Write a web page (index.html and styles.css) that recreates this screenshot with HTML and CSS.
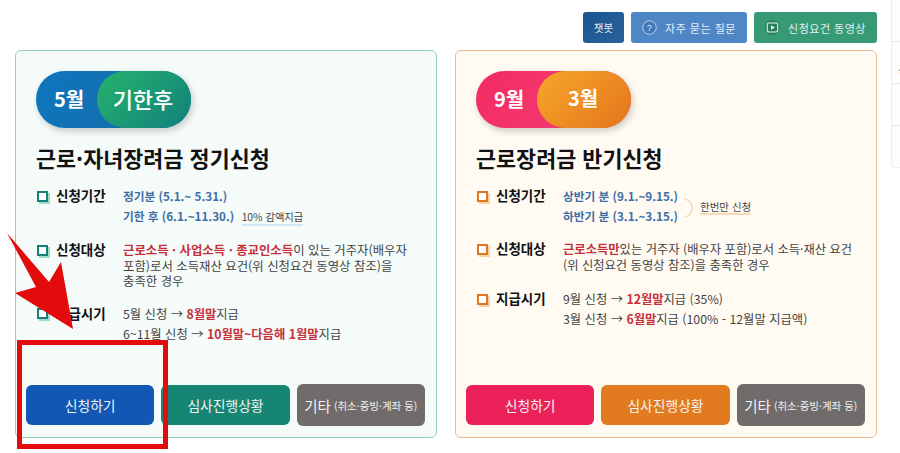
FILE: index.html
```html
<!DOCTYPE html>
<html lang="ko">
<head>
    <meta charset="utf-8">
    <title>근로장려금 신청</title>
    <link rel="stylesheet" href="styles.css">
</head>
<body>
    <div class="page">
        <div class="main">

            <div class="toolbar">
                <a class="toolBtn chatBtn">챗봇</a>
                <a class="toolBtn faqBtn">
                    <svg class="toolIcon" viewBox="0 0 20 20"><circle cx="10" cy="10" r="9" fill="#4478b4" stroke="#dbe7f5" stroke-width="1"/><text x="10" y="14.5" text-anchor="middle" font-size="12" fill="#e6eff9" font-family="Liberation Sans">?</text></svg>
                    자주 묻는 질문
                </a>
                <a class="toolBtn videoBtn">
                    <svg class="toolIcon" viewBox="0 0 20 20"><circle cx="10" cy="10" r="10" fill="#2a7f5f"/><rect x="3" y="4" width="14" height="12" rx="2.5" fill="none" stroke="#e8f5ef" stroke-width="1.4"/><path d="M8 7 L13 10 L8 13 Z" fill="#e8f5ef"/></svg>
                    신청요건 동영상
                </a>
            </div>

            <div class="cards">

                <section class="card cardGreen">
                    <div class="pill pillBlue">
                        <span class="pillStart">5월</span>
                        <span class="pillEnd pillEndGreen">기한후</span>
                    </div>
                    <h2 class="cardTitle">근로·자녀장려금 정기신청</h2>

                    <div class="infoRow">
                        <div class="infoLabel"><i class="mark markGreen"></i>신청기간</div>
                        <div class="infoValue spaced">
                            <div><b class="blue">정기분 (5.1.~ 5.31.)</b></div>
                            <div><b class="blue">기한 후 (6.1.~11.30.)</b> <span class="note noteBlue">10% 감액지급</span></div>
                        </div>
                    </div>

                    <div class="infoRow rowTarget">
                        <div class="infoLabel"><i class="mark markGreen"></i>신청대상</div>
                        <div class="infoValue wideText">
                            <b class="red">근로소득 · 사업소득 · 종교인소득</b>이 있는 거주자(배우자<br>포함)로서 소득재산 요건(위 신청요건 동영상 참조)을<br>충족한 경우
                        </div>
                    </div>

                    <div class="infoRow rowPay">
                        <div class="infoLabel"><i class="mark markGreen"></i>지급시기</div>
                        <div class="infoValue spaced">
                            <div>5월 신청 → <b class="red">8월말</b>지급</div>
                            <div>6~11월 신청 → <b class="red">10월말~다음해 1월말</b>지급</div>
                        </div>
                    </div>

                    <div class="actions">
                        <a class="actBtn btnBlue">신청하기</a>
                        <a class="actBtn btnTeal">심사진행상황</a>
                        <a class="actBtn btnGray">기타<small>(취소·증빙·계좌 등)</small></a>
                    </div>
                </section>

                <section class="card cardOrange">
                    <div class="pill pillPink">
                        <span class="pillStart">9월</span>
                        <span class="pillEnd pillEndOrange">3월</span>
                    </div>
                    <h2 class="cardTitle">근로장려금 반기신청</h2>

                    <div class="infoRow">
                        <div class="infoLabel"><i class="mark markOrange"></i>신청기간</div>
                        <div class="infoValue spaced">
                            <div><b class="blue">상반기 분 (9.1.~9.15.)</b></div>
                            <div><b class="blue">하반기 분 (3.1.~3.15.)</b></div>
                        </div>
                        <svg class="brace" viewBox="0 0 10 22"><path d="M1 1 C8 3 9 8 9 11 C9 14 8 19 1 21" fill="none" stroke="#ecd3a6" stroke-width="1.2"/></svg>
                        <span class="note noteOrange">한번만 신청</span>
                    </div>

                    <div class="infoRow rowTarget">
                        <div class="infoLabel"><i class="mark markOrange"></i>신청대상</div>
                        <div class="infoValue">
                            <b class="red">근로소득만</b>있는 거주자 (배우자 포함)로서 소득·재산 요건<br>(위 신청요건 동영상 참조)을 충족한 경우
                        </div>
                    </div>

                    <div class="infoRow rowPayShort">
                        <div class="infoLabel"><i class="mark markOrange"></i>지급시기</div>
                        <div class="infoValue spaced">
                            <div>9월 신청 → <b class="red">12월말</b>지급 (35%)</div>
                            <div>3월 신청 → <b class="red">6월말</b>지급 (100% - 12월말 지급액)</div>
                        </div>
                    </div>

                    <div class="actions">
                        <a class="actBtn btnPink">신청하기</a>
                        <a class="actBtn btnOrange">심사진행상황</a>
                        <a class="actBtn btnGray">기타<small>(취소·증빙·계좌 등)</small></a>
                    </div>
                </section>

            </div>
        </div>

        <div class="rail">
            <div class="railCell"></div>
            <div class="railCell">신</div>
            <div class="railCell"></div>
            <div class="railCell"></div>
        </div>

        <!-- annotation drawn over the page -->
        <svg class="arrow" viewBox="0 0 80 100"><polygon points="7,3 49,52 61,32 73,99 15,63 36,57" fill="#e30b0b"/></svg>
        <div class="frame"></div>
    </div>
</body>
</html>
```

FILE: styles.css
```css
*
{
    box-sizing: border-box;
}

html, body
{
    margin:   0;
    height:   453px;
    overflow: hidden;
}

body
{
    background-color: #fff;
    font-family:      "Noto Sans CJK KR", "Noto Sans", sans-serif;
    color:            #444;
}

.page
{
    position: relative;
    display:  flex;
    height:   453px;
}

.main
{
    flex:         none;
    width:        862px;
    margin-left:  15px;
    padding-top:  12px;
}

/* Top row of links */
.toolbar
{
    display:         flex;
    justify-content: flex-end;
    gap:             7px;
    height:          31px;
    margin-bottom:   7px;
}

.toolBtn
{
    display:         flex;
    align-items:     center;
    justify-content: center;
    gap:             8px;
    border-radius:   3px;
    font-size:       11px;
    color:           #e4eef8;
    letter-spacing:  0.5px;
}

.toolIcon
{
    width:  15px;
    height: 15px;
}

.chatBtn
{
    width:          41px;
    letter-spacing: 0;
    font-size:      10.5px;
    background:     linear-gradient(135deg, #1c558f, #2a6199);
}

.faqBtn
{
    width:            116px;
    background-color: #4f86c6;
}

.videoBtn
{
    width:            123px;
    background-color: #369b75;
}

/* Cards */
.cards
{
    display: flex;
    gap:     18px;
}

.card
{
    display:        flex;
    flex-direction: column;
    width:          422px;
    height:         388px;
    padding:        20px 11px 12px 20px;
    border-radius:  6px;
    border:         1px solid;
}

.cardGreen
{
    background-color: #f4fbf9;
    border-color:     #92cfba;
}

.cardOrange
{
    background-color: #fffbf3;
    border-color:     #edbb90;
}

.pill
{
    display:       flex;
    width:         155px;
    height:        57px;
    border-radius: 29px;
    box-shadow:    2px 3px 7px rgba(0, 0, 0, 0.2);
    color:         #fff;
    font-weight:   700;
}

.pillBlue
{
    background: linear-gradient(120deg, #0d76bd, #1a6aa6);
}

.pillPink
{
    background: linear-gradient(120deg, #f22c62, #f5407a);
}

.pillStart
{
    display:         flex;
    align-items:     center;
    justify-content: center;
    width:           61px;
    padding-left:    5px;
    padding-bottom:  3px;
    font-size:       20px;
}

.pillEnd
{
    display:         flex;
    align-items:     center;
    justify-content: center;
    flex:            1;
    padding-bottom:  4px;
    padding-right:   2px;
    border-radius:   29px;
    font-size:       22px;
    font-weight:     500;
}

.pillEndGreen
{
    background: linear-gradient(135deg, #27b36c, #10807d);
}

.pillEndOrange
{
    background:  linear-gradient(135deg, #f6a82c, #e4741b);
    font-size:   20px;
    font-weight: 700;
}

.cardTitle
{
    margin:      15px 0 13px;
    height:      30px;
    line-height: 30px;
    font-size:   21.8px;
    font-weight: 700;
    color:       #111;
}

/* Rows of label and value */
.infoRow
{
    display:     flex;
    align-items: flex-start;
    font-size:   12.3px;
    line-height: 15.5px;
}

.rowTarget
{
    margin-top: 13px;
}

.rowPay
{
    margin-top: 14px;
}

.rowPayShort
{
    margin-top: 16px;
}

.infoLabel
{
    display:     flex;
    align-items: center;
    flex:        none;
    width:       87px;
    height:      20px;
    font-size:   13.5px;
    font-weight: 700;
    color:       #111;
}

.mark
{
    flex:             none;
    width:            11px;
    height:           11px;
    margin-right:     8px;
    margin-left:      1px;
    background-color: #fff;
    border:           2px solid;
}

.markGreen
{
    border-color: #16807a;
    box-shadow:   2px 2px 0 #9fdcc8;
}

.markOrange
{
    border-color: #e2761f;
    box-shadow:   2px 2px 0 #f8d3a8;
}

.infoValue
{
    flex:        1;
    padding-top: 3px;
}

.wideText
{
    font-size: 12.4px;
}

.spaced
{
    flex:        none;
    padding-top: 0;
    line-height: 20px;
}

.blue
{
    color:       #3f6ea6;
    font-size:   11.7px;
    font-weight: 600;
}

.red
{
    color:       #c6303b;
    font-weight: 700;
}

.note
{
    font-size: 10.3px;
    color:     #444;
}

.noteBlue
{
    margin-left:   4px;
    border-bottom: 2px solid #cdeaf2;
}

.noteOrange
{
    margin-top:    14px;
    font-size:     10.5px;
    border-bottom: 2px solid #f8d8b8;
    line-height:   13px;
}

.brace
{
    width:  9px;
    height: 20px;
    margin: 12px 7px 0 6px;
}

/* Buttons at the card bottom */
.actions
{
    display:     flex;
    gap:         7px;
    margin-top:  auto;
    margin-left: -10px;
}

.actBtn
{
    display:         flex;
    align-items:     center;
    justify-content: center;
    flex:            1;
    height:          40px;
    border-radius:   6px;
    font-size:       13.8px;
    color:           #f2f2f2;
    white-space:     nowrap;
}

.actBtn small
{
    margin-left: 3px;
    font-size:   10.5px;
}

.btnBlue   { background-color: #1257b4; }
.btnTeal   { background-color: #178574; }
.btnOrange { background-color: #e27a1f; }
.btnPink   { background-color: #ec215a; }

.btnGray
{
    height:           42px;
    margin:           -1px 0;
    font-size:        14.5px;
    background-color: #716c6c;
}

/* Panel cut off by the right window edge */
.rail
{
    flex:             none;
    width:            9px;
    height:           168px;
    margin-left:      14px;
    overflow:         hidden;
    border-radius:    0 0 0 4px;
    border-left:      1px solid #eee;
    border-bottom:    1px solid #eee;
    background-color: #fdfdfd;
}

.railCell
{
    width:         60px;
    height:        42px;
    padding:       20px 0 0 6px;
    border-bottom: 1px solid #e8e8e8;
    font-size:     10px;
    color:         #777;
}

.railCell:last-child
{
    border-bottom: none;
}

/* Red annotation */
.arrow
{
    position: absolute;
    left:     0;
    top:      230px;
    width:    80px;
    height:   100px;
}

.frame
{
    position: absolute;
    left:     17px;
    top:      340px;
    width:    151px;
    height:   109px;
    border:   5px solid #e30b0b;
}
```
